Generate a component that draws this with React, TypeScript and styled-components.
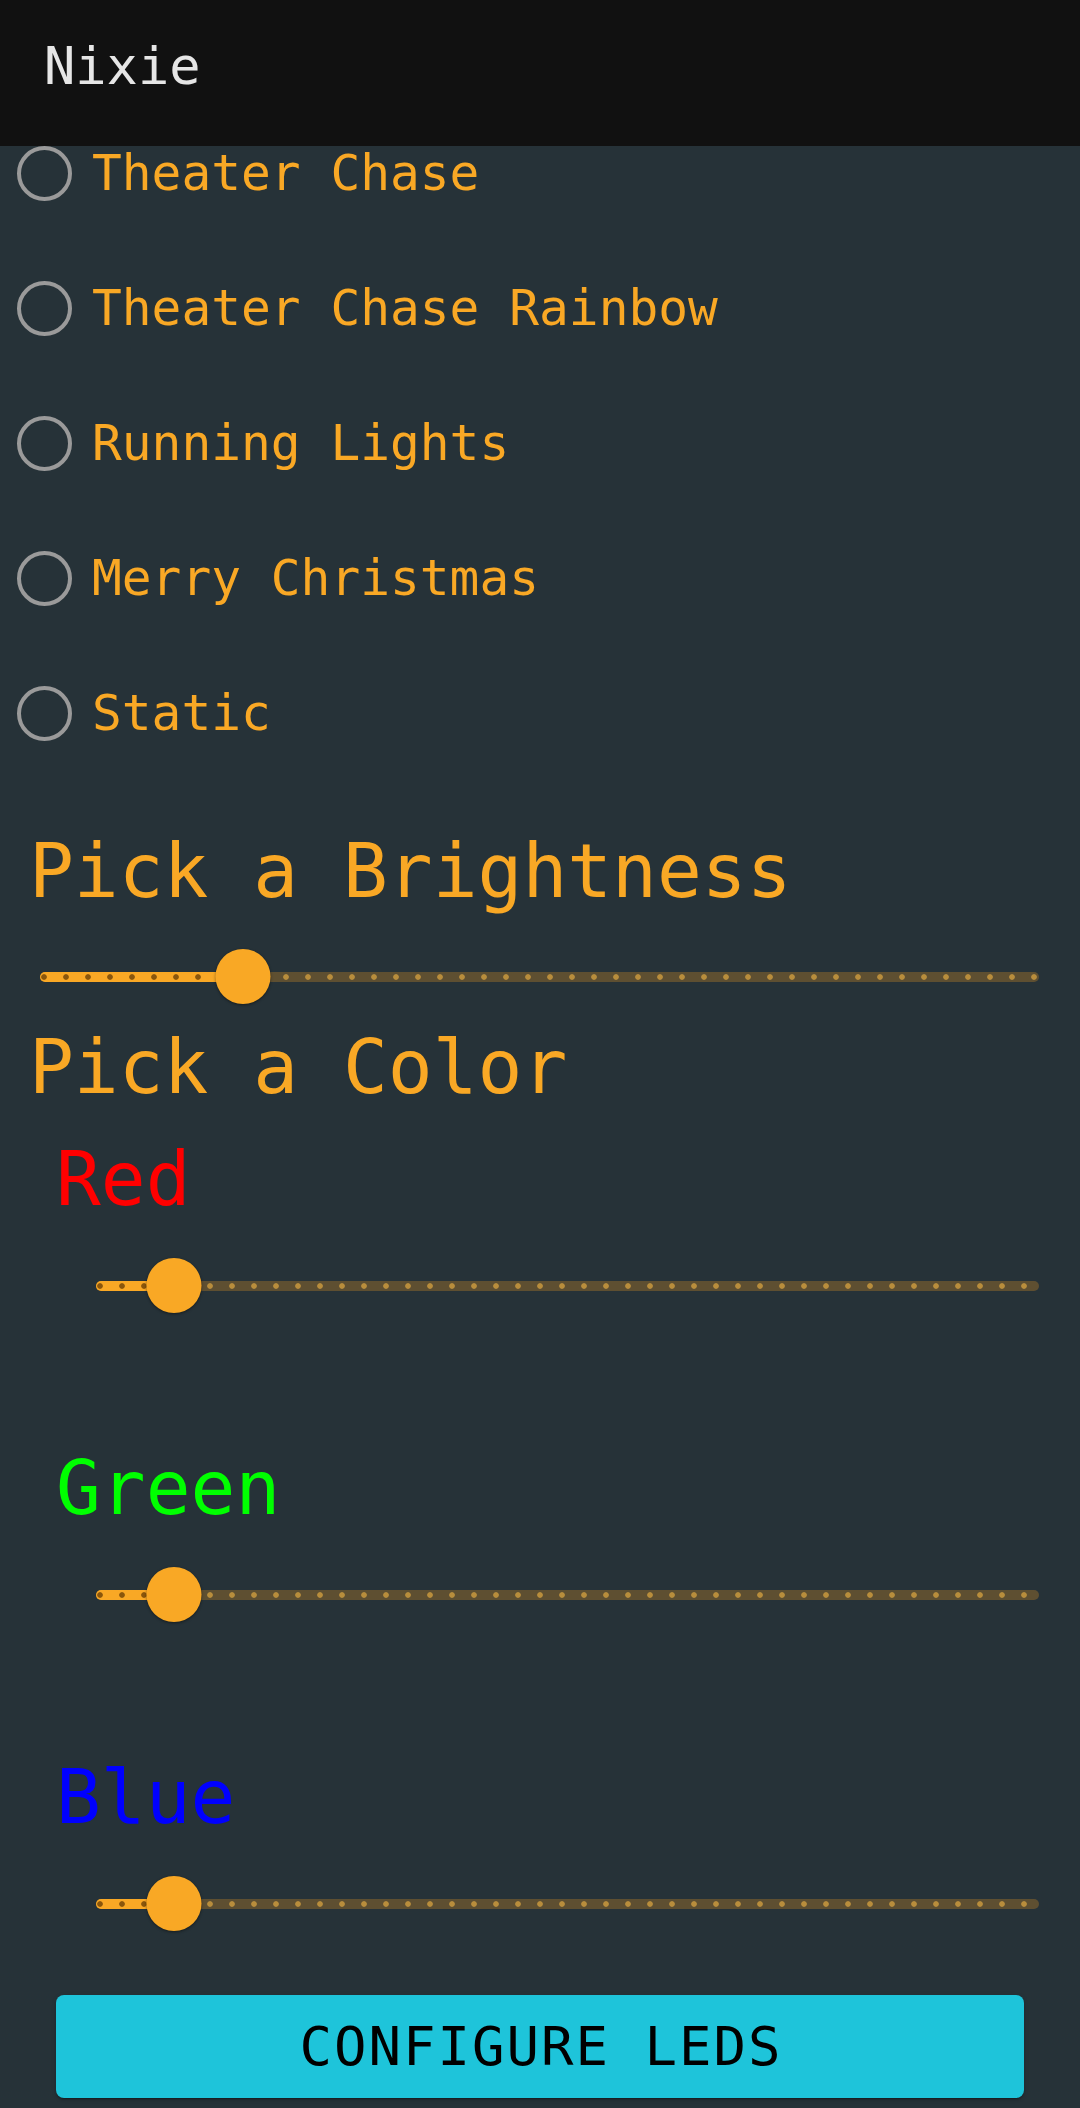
import React from 'react';
import styled, {createGlobalStyle} from 'styled-components';

const GlobalStyle = createGlobalStyle`
    body {
        margin: 0;
        background: #263238;
        font-family: "DejaVu Sans Mono", "Liberation Mono", monospace;
    }
`;

const ORANGE = '#f9a825';

const Page = styled.div`
    width: 1080px;
    min-height: 2108px;
    background: #263238;
    display: flex;
    flex-direction: column;
`;

const AppBar = styled.header`
    height: 146px;
    box-sizing: border-box;
    padding: 40px 0 0 44px;
    background: #111111;
    color: #e6e6e6;
    font-size: 52px;
    line-height: 1;
    position: sticky;
    top: 0;
    z-index: 2;
`;

const EffectList = styled.div`
    display: flex;
    flex-direction: column;
    gap: 80px;
    padding-left: 17px;
`;

const EffectRow = styled.label`
    display: flex;
    align-items: center;
    gap: 20px;
    height: 55px;
`;

const RadioCircle = styled.span`
    width: 55px;
    height: 55px;
    box-sizing: border-box;
    border: 4.5px solid #9a9a9a;
    border-radius: 50%;
    flex-shrink: 0;
`;

const EffectName = styled.span`
    color: ${ORANGE};
    font-size: 49.5px;
    line-height: 1;
    white-space: nowrap;
`;

const Heading = styled.h2<{$color?: string}>`
    margin: 0;
    font-weight: normal;
    font-size: 74.5px;
    line-height: 76px;
    color: ${p => p.$color || ORANGE};
    white-space: nowrap;
`;

const BrightnessBlock = styled.section`
    margin-top: 93px;
    padding: 0 41px 0 29px;
    display: flex;
    flex-direction: column;
`;

const ColorBlock = styled.section`
    margin-top: 25px;
    padding: 0 41px 0 29px;
    display: flex;
    flex-direction: column;
`;

const ChannelList = styled.div`
    margin-top: 36px;
    padding-left: 27px;
    display: flex;
    flex-direction: column;
    gap: 137px;
`;

const Channel = styled.div`
    display: flex;
    flex-direction: column;
`;

const SliderRoot = styled.div<{$indent: number; $gap: number}>`
    position: relative;
    height: 56px;
    margin-top: ${p => p.$gap}px;
    margin-left: ${p => p.$indent}px;
    display: flex;
    align-items: center;
`;

const dots = (c: string) => `radial-gradient(circle, ${c} 2.4px, transparent 3.2px)`;

const Rail = styled.div`
    width: 100%;
    height: 10px;
    border-radius: 5px;
    background-color: #5e4f31;
    background-image: ${dots('#b88d3c')};
    background-size: 22px 10px;
    background-position: -7px 0;
    background-repeat: repeat-x;
`;

const Track = styled.div`
    position: absolute;
    left: 0;
    top: 23px;
    height: 10px;
    border-radius: 5px 0 0 5px;
    background-color: ${ORANGE};
    background-image: ${dots('#8a560c')};
    background-size: 22px 10px;
    background-position: -7px 0;
    background-repeat: repeat-x;
`;

const Thumb = styled.span`
    position: absolute;
    top: 0;
    width: 55px;
    height: 55px;
    border-radius: 50%;
    background: ${ORANGE};
    transform: translateX(-50%);
    box-shadow: 0 1px 3px rgba(0,0,0,0.45);
`;

const ConfigureButton = styled.button`
    margin: 63px 56px 11px 56px;
    height: 103px;
    border: none;
    border-radius: 8px;
    background: #1ec4da;
    color: #000;
    font-family: "DejaVu Sans Mono", monospace;
    font-size: 54px;
    letter-spacing: 2px;
    padding: 0 0 0 2px;
    text-transform: uppercase;
    box-shadow: 0 3px 1px -2px rgba(0,0,0,.2), 0 2px 2px rgba(0,0,0,.14), 0 1px 5px rgba(0,0,0,.12);
`;

interface SliderProps { value: number; max: number; indent: number; gap: number; }

const Slider: React.FC<SliderProps> = ({value, max, indent, gap}) => {
    const pct = (value / max) * 100;
    return (
        <SliderRoot $indent={indent} $gap={gap}>
            <Rail />
            <Track style={{width: pct + '%'}} />
            <Thumb style={{left: pct + '%'}} />
        </SliderRoot>
    );
};

const effects = ['Theater Chase', 'Theater Chase Rainbow', 'Running Lights', 'Merry Christmas', 'Static'];

const channels = [
    {name: 'Red', color: '#ff0000'},
    {name: 'Green', color: '#00ff00'},
    {name: 'Blue', color: '#0000ff'},
];

const App: React.FC = () => {
    return (
        <Page>
            <GlobalStyle />
            <AppBar>Nixie</AppBar>
            <EffectList>
                {effects.map(e => (
                    <EffectRow key={e}>
                        <RadioCircle />
                        <EffectName>{e}</EffectName>
                    </EffectRow>
                ))}
            </EffectList>
            <BrightnessBlock>
                <Heading>Pick a Brightness</Heading>
                <Slider value={51.8} max={255} indent={11} gap={39} />
            </BrightnessBlock>
            <ColorBlock>
                <Heading>Pick a Color</Heading>
                <ChannelList>
                    {channels.map(c => (
                        <Channel key={c.name}>
                            <Heading $color={c.color}>{c.name}</Heading>
                            <Slider value={21} max={255} indent={40} gap={40} />
                        </Channel>
                    ))}
                </ChannelList>
            </ColorBlock>
            <ConfigureButton>Configure LEDs</ConfigureButton>
        </Page>
    );
};

export default App;
